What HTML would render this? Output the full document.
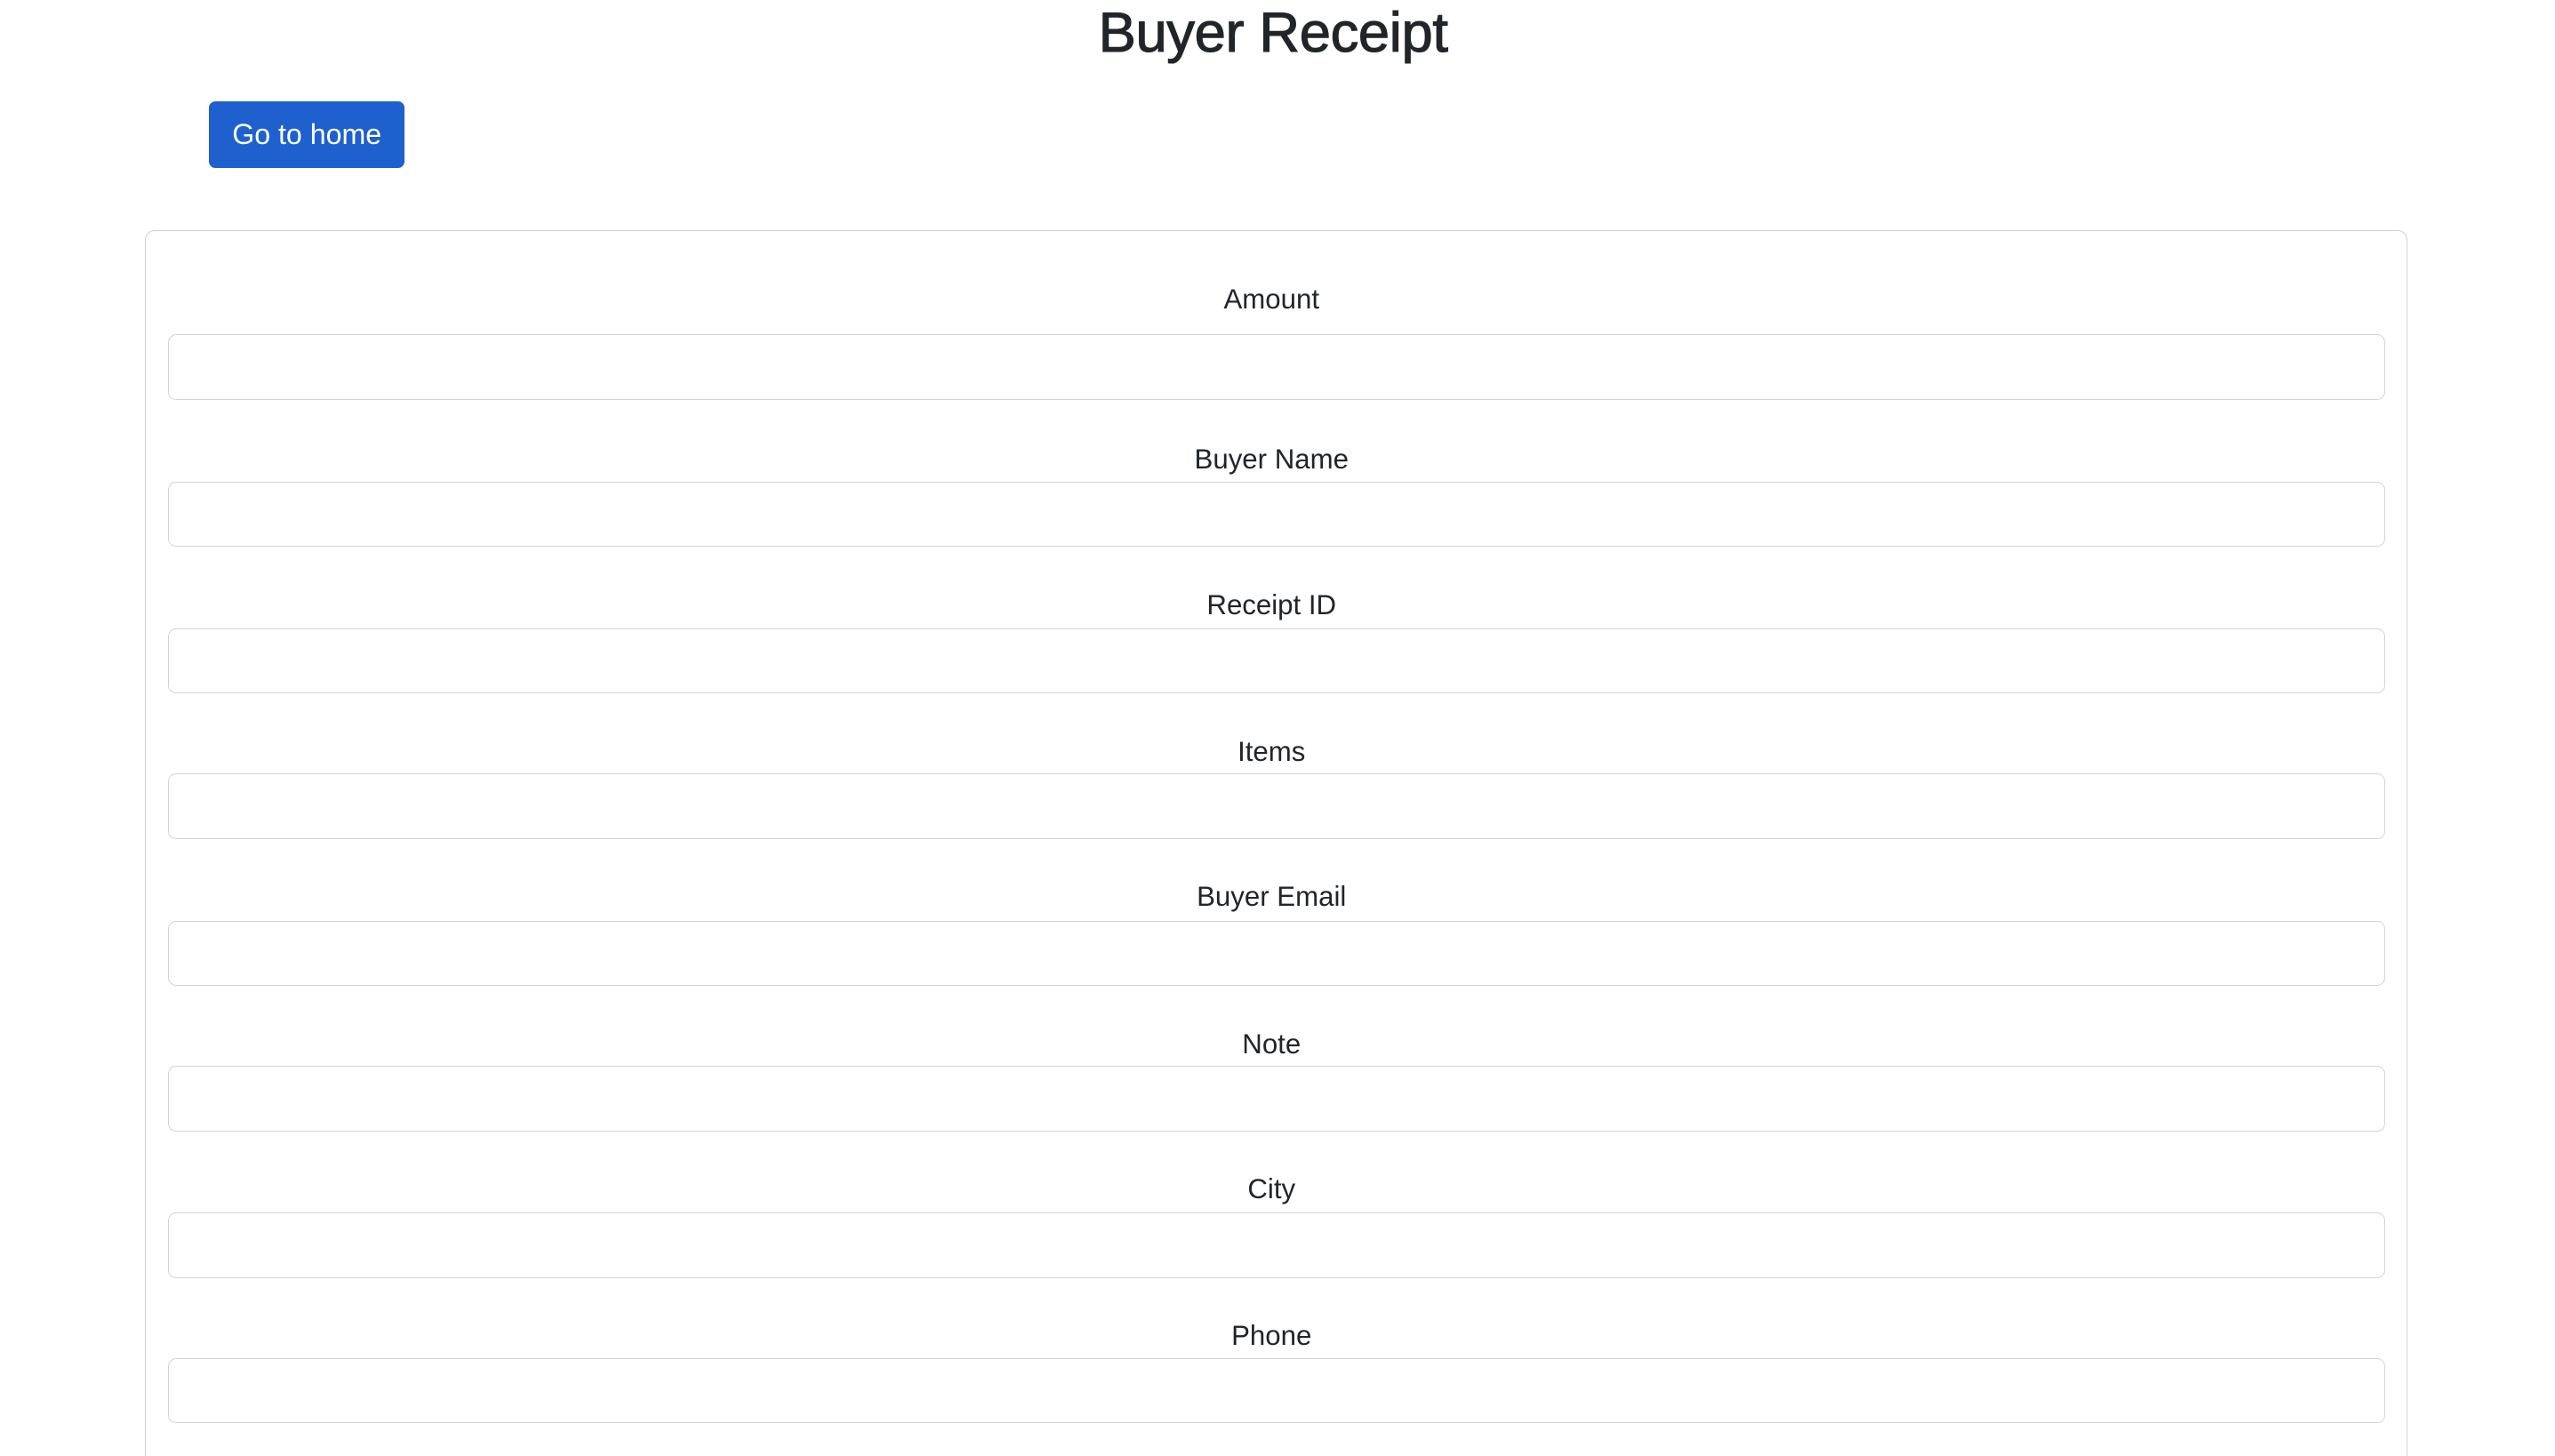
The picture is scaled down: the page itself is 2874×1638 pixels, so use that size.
<!DOCTYPE html>
<html><head><meta charset="utf-8"><style>
html,body{margin:0;padding:0;background:#fff;overflow:hidden}
html{width:2874px;height:1636px}
body{width:1566px;height:892px;zoom:1.836;position:relative;font-family:"Liberation Sans",Arial,sans-serif;color:#212529;overflow:hidden}
h1{position:absolute;left:0;width:1560px;top:0;margin:0;text-align:center;font-size:34.5px;font-weight:normal;-webkit-text-stroke:0.6px #212529;line-height:41px;letter-spacing:-0.2px}
.btn{position:absolute;left:128px;top:62px;width:120px;height:41px;background:#1f60cf;color:#fff;border-radius:4px;font-size:17.5px;line-height:41px;text-align:center}
.card{position:absolute;left:89px;top:141px;width:1385px;height:780px;border:1px solid #d0d0d0;border-radius:6px}
.lbl{position:absolute;left:0;width:1558px;text-align:center;font-size:17px;line-height:20px}
.inp{position:absolute;left:103px;width:1357px;height:39px;border:1px solid #ced4da;border-radius:5px}
</style></head><body>
<h1>Buyer Receipt</h1>
<div class="btn">Go to home</div>
<div class="card"></div>
<div class="lbl" style="top:174px">Amount</div><div class="inp" style="top:205px"></div>
<div class="lbl" style="top:272px">Buyer Name</div><div class="inp" style="top:295px"></div>
<div class="lbl" style="top:361px">Receipt ID</div><div class="inp" style="top:385px"></div>
<div class="lbl" style="top:451px">Items</div><div class="inp" style="top:474px"></div>
<div class="lbl" style="top:540px">Buyer Email</div><div class="inp" style="top:564px"></div>
<div class="lbl" style="top:630px">Note</div><div class="inp" style="top:653px"></div>
<div class="lbl" style="top:719px">City</div><div class="inp" style="top:743px"></div>
<div class="lbl" style="top:809px">Phone</div><div class="inp" style="top:832px"></div>
</body></html>
